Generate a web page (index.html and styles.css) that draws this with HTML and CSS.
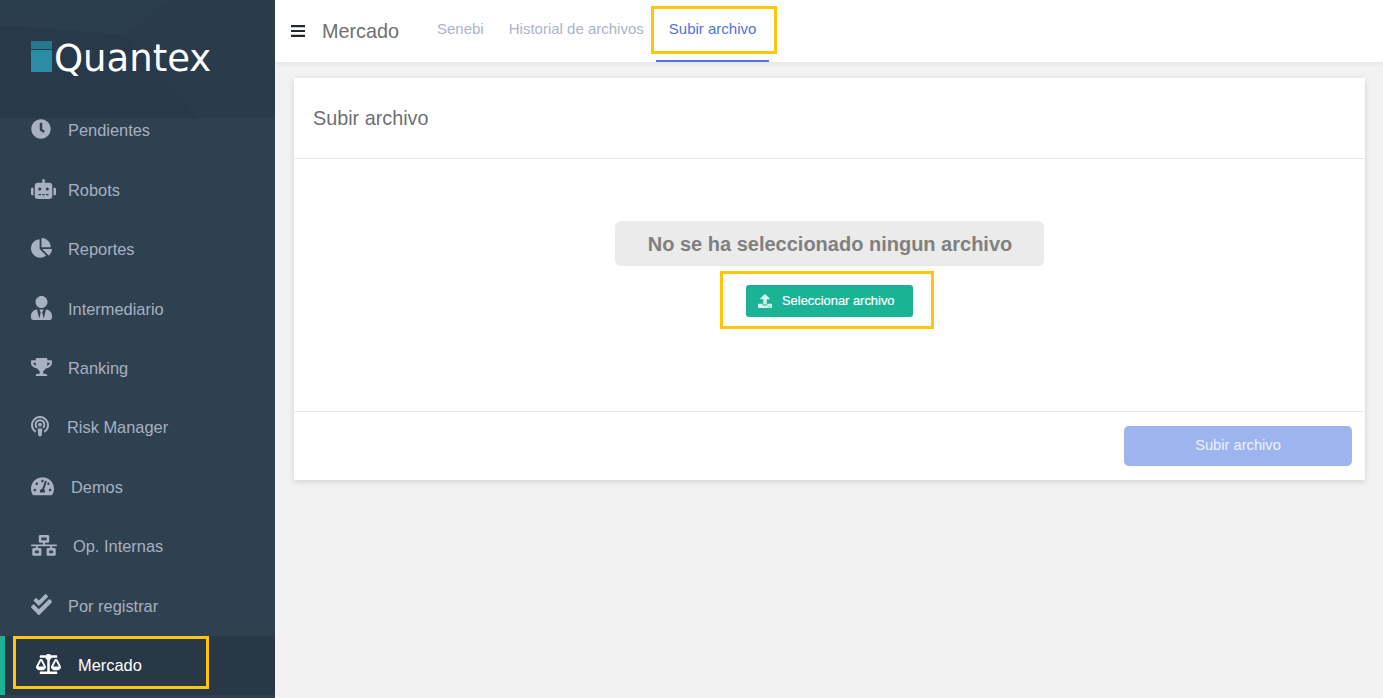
FILE: index.html
```html
<!DOCTYPE html>
<html lang="es">
<head>
<meta charset="utf-8">
<title>Mercado</title>
<link rel="stylesheet" href="styles.css">
</head>
<body>
<div class="app">
  <aside class="sidebar">
    <div class="brand">
      <svg class="brand-bg" viewBox="0 0 275 118" preserveAspectRatio="none" aria-hidden="true">
        <polygon points="0,0 170,0 125,35 0,25" fill="#2b3e4e"/>
        <polygon points="125,35 170,0 275,0 275,118 197,118" fill="#2a3c4c"/>
        <polygon points="0,25 125,35 197,118 0,118" fill="#283a4a"/>
      </svg>
      <svg class="brand-mark" viewBox="0 0 21 31" aria-hidden="true">
        <rect width="21" height="8" fill="#26788f"/>
        <rect y="9" width="21" height="22" fill="#2b8ca6"/>
      </svg>
      <span class="brand-name">Quantex</span>
    </div>
    <nav class="nav">
      <a class="nav-item"><span class="slot"><svg class="ico w20" viewBox="0 0 512 512"><path d="M256,8C119,8,8,119,8,256S119,504,256,504,504,393,504,256,393,8,256,8Zm92.49,313h0l-20,25a16,16,0,0,1-22.49,2.5h0l-67-49.72a40,40,0,0,1-15-31.23V112a16,16,0,0,1,16-16h32a16,16,0,0,1,16,16V256l58,42.5A16,16,0,0,1,348.49,321Z"/></svg></span>Pendientes</a>
      <a class="nav-item"><span class="slot"><svg class="ico w25" viewBox="0 0 640 512"><path d="M32,224H64V416H32A31.96166,31.96166,0,0,1,0,384V256A31.96166,31.96166,0,0,1,32,224Zm512-48V448a64.06328,64.06328,0,0,1-64,64H160a64.06328,64.06328,0,0,1-64-64V176a79.974,79.974,0,0,1,80-80H288V32a32,32,0,0,1,64,0V96H464A79.974,79.974,0,0,1,544,176ZM264,256a40,40,0,1,0-40,40A39.997,39.997,0,0,0,264,256Zm-8,128H192v32h64Zm96,0H288v32h64ZM456,256a40,40,0,1,0-40,40A39.997,39.997,0,0,0,456,256Zm-8,128H384v32h64ZM640,256V384a31.96166,31.96166,0,0,1-32,32H576V224h32A31.96166,31.96166,0,0,1,640,256Z"/></svg></span>Robots</a>
      <a class="nav-item"><span class="slot"><svg class="ico w21" viewBox="0 0 544 512"><path d="M527.79 288H290.5l158.03 158.03c6.04 6.04 15.98 6.53 22.19.68 38.7-36.46 65.32-85.61 73.13-140.86 1.34-9.46-6.51-17.85-16.06-17.85zm-15.83-64.8C503.72 103.74 408.26 8.28 288.8.04 279.68-.59 272 7.1 272 16.24V240h223.77c9.14 0 16.82-7.68 16.19-16.8zM224 288V50.71c0-9.55-8.39-17.4-17.84-16.06C86.99 51.49-4.1 155.6.14 280.37 4.5 408.51 114.83 513.59 243.03 511.98c50.4-.63 96.97-16.87 135.26-44.03 7.9-5.6 8.42-17.23 1.57-24.08L224 288z"/></svg></span>Reportes</a>
      <a class="nav-item"><span class="slot"><svg class="ico w21" viewBox="0 0 448 512"><path d="M224 256c70.7 0 128-57.3 128-128S294.7 0 224 0 96 57.3 96 128s57.3 128 128 128zm95.8 32.6L272 480l-32-136 32-56h-96l32 56-32 136-47.8-191.4C56.9 292 0 350.3 0 422.4V464c0 26.5 21.5 48 48 48h352c26.5 0 48-21.5 48-48v-41.6c0-72.1-56.9-130.4-128.2-133.8z"/></svg></span>Intermediario</a>
      <a class="nav-item"><span class="slot"><svg class="ico w21" viewBox="0 0 576 512"><path d="M552 64H448V24c0-13.3-10.7-24-24-24H152c-13.3 0-24 10.7-24 24v40H24C10.7 64 0 74.7 0 88v56c0 35.7 22.5 72.4 61.9 100.7 31.5 22.7 69.8 37.1 110 41.7C203.3 338.5 240 360 240 360v72h-48c-35.3 0-64 20.7-64 56v12c0 6.6 5.4 12 12 12h296c6.6 0 12-5.4 12-12v-12c0-35.3-28.7-56-64-56h-48v-72s36.7-21.5 68.1-73.6c40.3-4.6 78.6-19 110-41.7 39.3-28.3 61.9-65 61.9-100.7V88c0-13.3-10.7-24-24-24zM99.3 192.8C74.9 175.2 64 155.6 64 144v-16h64.2c1 32.6 5.8 61.2 12.8 86.2-15.1-5.2-29.2-12.4-41.7-21.4zM512 144c0 16.1-17.7 36.1-35.3 48.8-12.5 9-26.7 16.2-41.8 21.4 7-25 11.8-53.6 12.8-86.2H512v16z"/></svg></span>Ranking</a>
      <a class="nav-item"><span class="slot slot-36"><svg class="ico w18" viewBox="0 0 18 21"><path class="ring" d="M4.6 15.8A8 8 0 1 1 13.4 15.8"/><path class="ring" d="M6 11.8A4.4 4.4 0 1 1 12 11.8"/><circle cx="9" cy="8.7" r="1.9"/><path d="M6.6 12.8Q9 11.6 11.4 12.8L10.6 19.8Q9 21.4 7.4 19.8Z"/></svg></span>Risk Manager</a>
      <a class="nav-item"><span class="slot slot-40"><svg class="ico w23" viewBox="0 0 576 512"><path d="M288 32C128.94 32 0 160.94 0 320c0 52.8 14.25 102.26 39.06 144.8 5.61 9.62 16.3 15.2 27.44 15.2h443c11.14 0 21.83-5.58 27.44-15.2C561.75 422.26 576 372.8 576 320c0-159.06-128.94-288-288-288zm0 64c14.71 0 26.58 10.13 30.32 23.65-1.11 2.26-2.64 4.23-3.45 6.67l-9.22 27.67c-5.13 3.49-10.97 6.01-17.64 6.01-17.67 0-32-14.33-32-32S270.33 96 288 96zM96 384c-17.67 0-32-14.33-32-32s14.33-32 32-32 32 14.33 32 32-14.33 32-32 32zm48-160c-17.67 0-32-14.33-32-32s14.33-32 32-32 32 14.33 32 32-14.33 32-32 32zm246.77-72.41l-61.33 184C343.13 347.33 352 364.54 352 384c0 11.72-3.38 22.55-8.88 32H232.88c-5.5-9.45-8.88-20.28-8.88-32 0-33.94 26.5-61.43 59.9-63.59l61.34-184.01c4.17-12.56 17.73-19.45 30.36-15.17 12.57 4.19 19.35 17.79 15.17 30.36zm14.66 57.2l15.52-46.55c3.47-1.29 7.13-2.23 11.05-2.23 17.67 0 32 14.33 32 32s-14.33 32-32 32c-11.38-.01-20.89-6.28-26.57-15.22zM480 384c-17.67 0-32-14.33-32-32s14.33-32 32-32 32 14.33 32 32-14.33 32-32 32z"/></svg></span>Demos</a>
      <a class="nav-item"><span class="slot slot-42"><svg class="ico w26" viewBox="0 0 640 512"><path d="M640 264v-16c0-8.84-7.16-16-16-16H344v-40h72c17.67 0 32-14.33 32-32V32c0-17.67-14.33-32-32-32H224c-17.67 0-32 14.33-32 32v128c0 17.67 14.33 32 32 32h72v40H16c-8.84 0-16 7.16-16 16v16c0 8.84 7.16 16 16 16h104v40H64c-17.67 0-32 14.33-32 32v128c0 17.67 14.33 32 32 32h160c17.67 0 32-14.33 32-32V352c0-17.67-14.33-32-32-32h-56v-40h304v40h-56c-17.67 0-32 14.33-32 32v128c0 17.67 14.33 32 32 32h160c17.67 0 32-14.33 32-32V352c0-17.67-14.33-32-32-32h-56v-40h104c8.84 0 16-7.16 16-16zM256 128V64h128v64H256zm-64 320H96v-64h96v64zm352 0h-96v-64h96v64z"/></svg></span>Op. Internas</a>
      <a class="nav-item"><span class="slot"><svg class="ico w21" viewBox="0 0 512 512"><path d="M505 174.8l-39.6-39.6c-9.4-9.4-24.6-9.4-33.9 0L192 374.7 80.6 263.2c-9.4-9.4-24.6-9.4-33.9 0L7 302.9c-9.4 9.4-9.4 24.6 0 34L175 505c9.4 9.4 24.6 9.4 33.9 0l296-296.2c9.4-9.5 9.4-24.7.1-34zm-324.3 106c6.2 6.3 16.4 6.3 22.6 0l208-208.2c6.2-6.3 6.2-16.4 0-22.6L366.1 4.7c-6.2-6.3-16.4-6.3-22.6 0L192 156.2l-55.4-55.5c-6.2-6.3-16.4-6.3-22.6 0L68.7 146c-6.2 6.3-6.2 16.4 0 22.6l112 112.9z"/></svg></span>Por registrar</a>
      <a class="nav-item is-active"><span class="slot slot-42"><svg class="ico w25" viewBox="0 0 640 512"><path d="M256 336h-.02c0-16.18 1.34-8.73-85.05-181.51-17.65-35.29-68.19-35.36-85.87 0C-2.06 328.75.02 320.33.02 336H0c0 44.18 57.31 80 128 80s128-35.82 128-80zM128 176l72 144H56l72-144zm511.98 160c0-16.18 1.34-8.73-85.05-181.51-17.65-35.29-68.19-35.36-85.87 0-87.12 174.26-85.04 165.84-85.04 181.51H384c0 44.18 57.31 80 128 80s128-35.82 128-80h-.02zM440 320l72-144 72 144H440zm88 128H352V153.25c23.51-10.29 41.16-31.48 46.39-57.25H528c8.84 0 16-7.16 16-16V48c0-8.84-7.16-16-16-16H383.64C369.04 12.68 346.09 0 320 0s-49.04 12.68-63.64 32H112c-8.84 0-16 7.16-16 16v32c0 8.84 7.16 16 16 16h129.61c5.23 25.76 22.87 46.96 46.39 57.25V448H112c-8.84 0-16 7.16-16 16v32c0 8.84 7.16 16 16 16h416c8.84 0 16-7.16 16-16v-32c0-8.84-7.16-16-16-16z"/></svg></span>Mercado</a>
    </nav>
  </aside>
  <div class="main">
    <header class="topbar">
      <svg class="burger" viewBox="0 0 14 12" aria-hidden="true"><path d="M0 0h14v2.2H0zM0 4.9h14v2.2H0zM0 9.8h14v2.2H0z"/></svg>
      <span class="page-title">Mercado</span>
      <div class="tabs">
        <a class="tab">Senebi</a>
        <a class="tab">Historial de archivos</a>
        <a class="tab is-active">Subir archivo</a>
      </div>
    </header>
    <section class="content">
      <div class="card">
        <div class="card-head">Subir archivo</div>
        <div class="card-body">
          <div class="file-msg">No se ha seleccionado ningun archivo</div>
          <button class="btn-select" type="button">
            <svg class="btn-ico" viewBox="0 0 512 512" aria-hidden="true"><path d="M296 384h-80c-13.3 0-24-10.7-24-24V192h-87.7c-17.8 0-26.7-21.5-14.1-34.1L242.3 5.7c7.5-7.5 19.8-7.5 27.3 0l152.2 152.2c12.6 12.6 3.7 34.1-14.1 34.1H320v168c0 13.3-10.7 24-24 24zm216-8v112c0 13.3-10.7 24-24 24H24c-13.3 0-24-10.7-24-24V376c0-13.3 10.7-24 24-24h136v8c0 30.9 25.1 56 56 56h80c30.9 0 56-25.1 56-56v-8h136c13.3 0 24 10.7 24 24zm-124 88c0-11-9-20-20-20s-20 9-20 20 9 20 20 20 20-9 20-20zm64 0c0-11-9-20-20-20s-20 9-20 20 9 20 20 20 20-9 20-20z"/></svg>
            <span class="btn-label">Seleccionar archivo</span>
          </button>
        </div>
        <div class="card-foot">
          <button class="btn-submit" type="button">Subir archivo</button>
        </div>
      </div>
    </section>
  </div>
</div>
</body>
</html>
```

FILE: styles.css
```css
*, *::before, *::after { box-sizing: border-box; }
html, body { margin: 0; height: 100%; }
body {
  font-family: "Liberation Sans", Arial, sans-serif;
  background: #f2f2f2;
  overflow: hidden;
}
.app { display: flex; height: 698px; }

/* Sidebar */
.sidebar {
  width: 275px;
  flex: none;
  background: #2f4050;
  overflow: hidden;
}
.brand {
  position: relative;
  z-index: 1;
  height: 118px;
  background: #293b4b;
  display: flex;
  align-items: flex-start;
  padding: 41px 0 0 31px;
  overflow: hidden;
}
.brand-bg { position: absolute; inset: 0; width: 100%; height: 100%; }
.brand-mark { position: relative; width: 21px; height: 31px; flex: none; }
.brand-name {
  position: relative;
  margin: -4px 0 0 2px;
  font-family: "DejaVu Sans", sans-serif;
  font-size: 37px;
  line-height: 44px;
  color: #fff;
}
.nav { margin-top: -17px; }
.nav-item {
  position: relative;
  display: flex;
  align-items: center;
  height: 59.44px;
  padding-left: 31px;
  font-size: 16.4px;
  color: #a7b1c2;
}
.slot { width: 37px; flex: none; display: flex; align-items: center; margin-top: -3px; }
.slot-36 { width: 36px; }
.slot-40 { width: 40px; }
.slot-42 { width: 42px; }
.ico { display: block; height: auto; fill: currentColor; }
.w18 { width: 18px; }
.w20 { width: 20px; }
.w21 { width: 21px; }
.w23 { width: 23px; }
.w25 { width: 25px; }
.w26 { width: 26px; }
.ring { fill: none; stroke: currentColor; stroke-width: 2; }
.nav-item.is-active {
  padding-left: 36px;
  background: #293846;
  color: #fff;
  box-shadow: inset 5px 0 0 #1ab394;
}
.nav-item.is-active::after {
  content: "";
  position: absolute;
  left: 13px;
  top: 0;
  width: 196px;
  height: 53px;
  border: 3px solid #ffc60b;
}

/* Main column */
.main { flex: 1; min-width: 0; display: flex; flex-direction: column; }
.topbar {
  height: 62px;
  flex: none;
  background: #fff;
  display: flex;
  align-items: center;
  padding-left: 16px;
  box-shadow: 0 1px 6px rgba(0, 0, 0, .08);
}
.burger { width: 14px; height: 12px; fill: #23272b; flex: none; margin-right: 17px; }
.page-title { font-size: 19.8px; color: #6e7072; width: 115px; flex: none; }
.tabs { display: flex; height: 100%; margin-left: -12.5px; }
.tab {
  position: relative;
  display: block;
  height: 100%;
  padding: 20px 12.5px 0;
  font-size: 15px;
  line-height: 18px;
  color: #acb3ca;
}
.tab.is-active { color: #4e73df; }
.tab.is-active::before {
  content: "";
  position: absolute;
  left: 0;
  right: 0;
  bottom: 0;
  height: 2px;
  background: #4e73df;
}
.tab.is-active::after {
  content: "";
  position: absolute;
  left: -5px;
  right: -8px;
  top: 6px;
  height: 48px;
  border: 3px solid #ffc60b;
}

/* Content */
.content { flex: 1; padding: 16px 18px 0 19px; }
.card {
  background: #fff;
  box-shadow: 0 2px 6px rgba(0, 0, 0, .13);
}
.card-head {
  height: 81px;
  padding: 28px 19px 0;
  font-size: 19.8px;
  line-height: 24px;
  color: #6e7072;
  border-bottom: 1px solid #e8e8e8;
}
.card-body {
  height: 253px;
  padding-top: 62px;
  display: flex;
  flex-direction: column;
  align-items: center;
  border-bottom: 1px solid #e8e8e8;
}
.file-msg {
  width: 429px;
  height: 45px;
  border-radius: 6px;
  background: #ebebeb;
  color: #808080;
  font-size: 20px;
  font-weight: 700;
  line-height: 46px;
  padding-left: 1px;
  text-align: center;
}
.btn-select {
  position: relative;
  margin-top: 19px;
  width: 167px;
  height: 32px;
  border: 0;
  border-radius: 3px;
  background: #1ab394;
  color: #fff;
  font: 12.9px "Liberation Sans", Arial, sans-serif;
  display: flex;
  align-items: center;
  padding: 0 0 0 12px;
  -webkit-text-stroke: .2px #fff;
}
.btn-label { margin-top: -2px; }
.btn-select::after {
  content: "";
  position: absolute;
  left: -26px;
  right: -21px;
  top: -14px;
  bottom: -12px;
  border: 3px solid #ffc60b;
}
.btn-ico { width: 14px; height: 14px; fill: #d6f2ec; margin-right: 10px; flex: none; }
.card-foot {
  height: 68px;
  padding: 14px 13px 0 0;
  display: flex;
  justify-content: flex-end;
  align-items: flex-start;
}
.btn-submit {
  width: 228px;
  height: 40px;
  border: 0;
  border-radius: 5px;
  background: #9db4ee;
  color: #eef2fd;
  padding: 0 0 3px;
  font: 14.7px "Liberation Sans", Arial, sans-serif;
}
```
